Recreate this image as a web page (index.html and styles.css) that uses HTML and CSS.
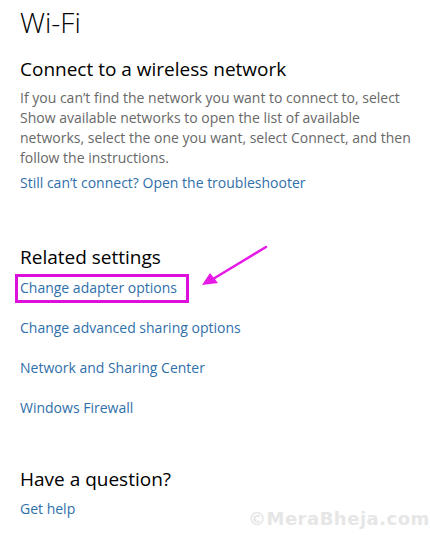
FILE: index.html
```html
<!DOCTYPE html>
<html lang="en">
<head>
    <meta charset="UTF-8">
    <title>Wi-Fi</title>
    <link rel="stylesheet" href="styles.css">
</head>
<body>
    <div class="page">
        <h1 class="title">Wi-Fi</h1>

        <!-- Connect section -->
        <div class="section">
            <h2>Connect to a wireless network</h2>
            <p class="desc">If you can’t find the network you want to connect to, select Show available networks to open the list of available networks, select the one you want, select Connect, and then follow the instructions.</p>
            <a class="link" href="#">Still can’t connect? Open the troubleshooter</a>
        </div>

        <!-- Related settings -->
        <div class="section related">
            <h2>Related settings</h2>
            <div class="link-list">
                <div class="row">
                    <a class="link marked" href="#">Change adapter options</a>
                    <svg class="arrow" width="80" height="50" viewBox="0 0 80 50">
                        <line x1="68" y1="4" x2="15" y2="36" stroke="#e619e6" stroke-width="2.5" stroke-linecap="round"/>
                        <polygon points="4,42 12,30 20,40" fill="#e619e6"/>
                    </svg>
                </div>
                <a class="link" href="#">Change advanced sharing options</a>
                <a class="link" href="#">Network and Sharing Center</a>
                <a class="link" href="#">Windows Firewall</a>
            </div>
        </div>

        <!-- Help -->
        <div class="section help">
            <h2>Have a question?</h2>
            <a class="link" href="#">Get help</a>
        </div>
    </div>
    <div class="watermark">©MeraBheja.com</div>
</body>
</html>
```

FILE: styles.css
```css
body {
    margin: 0;
    padding: 0;
    background: #ffffff;
    font-family: "Open Sans", "Noto Sans", sans-serif;
    color: #000;
    overflow: hidden;
}

.page {
    padding: 0 10px 0 20px;
}

.title {
    font-size: 28px;
    font-weight: 300;
    line-height: 36px;
    margin: 4px 0 0;
}

.section {
    display: flex;
    flex-direction: column;
    align-items: flex-start;
}

.section h2 {
    font-size: 19px;
    font-weight: 400;
    line-height: 28px;
    margin: 15px 0 5px;
}

.desc {
    font-size: 14px;
    line-height: 20px;
    color: #686868;
    margin: 0 0 5px;
}

.link {
    font-size: 14px;
    line-height: 20px;
    color: #2f6faa;
    text-decoration: none;
}

.related h2 {
    margin-top: 50px;
}

.link-list {
    display: flex;
    flex-direction: column;
    gap: 20px;
}

.row {
    position: relative;
}

.marked {
    display: inline-block;
    margin: -4px 0 -5px -5px;
    padding: 1px 9px 2px 2px;
    border: 3px solid #dd0fdd;
}

.arrow {
    position: absolute;
    left: 178px;
    top: -33px;
}

.help h2 {
    margin-top: 47px;
    margin-bottom: 6px;
}

.watermark {
    position: absolute;
    left: 248px;
    top: 508px;
    font-family: "DejaVu Sans", sans-serif;
    font-weight: bold;
    font-size: 18px;
    color: #e6e6e6;
    letter-spacing: 0.5px;
}
```
